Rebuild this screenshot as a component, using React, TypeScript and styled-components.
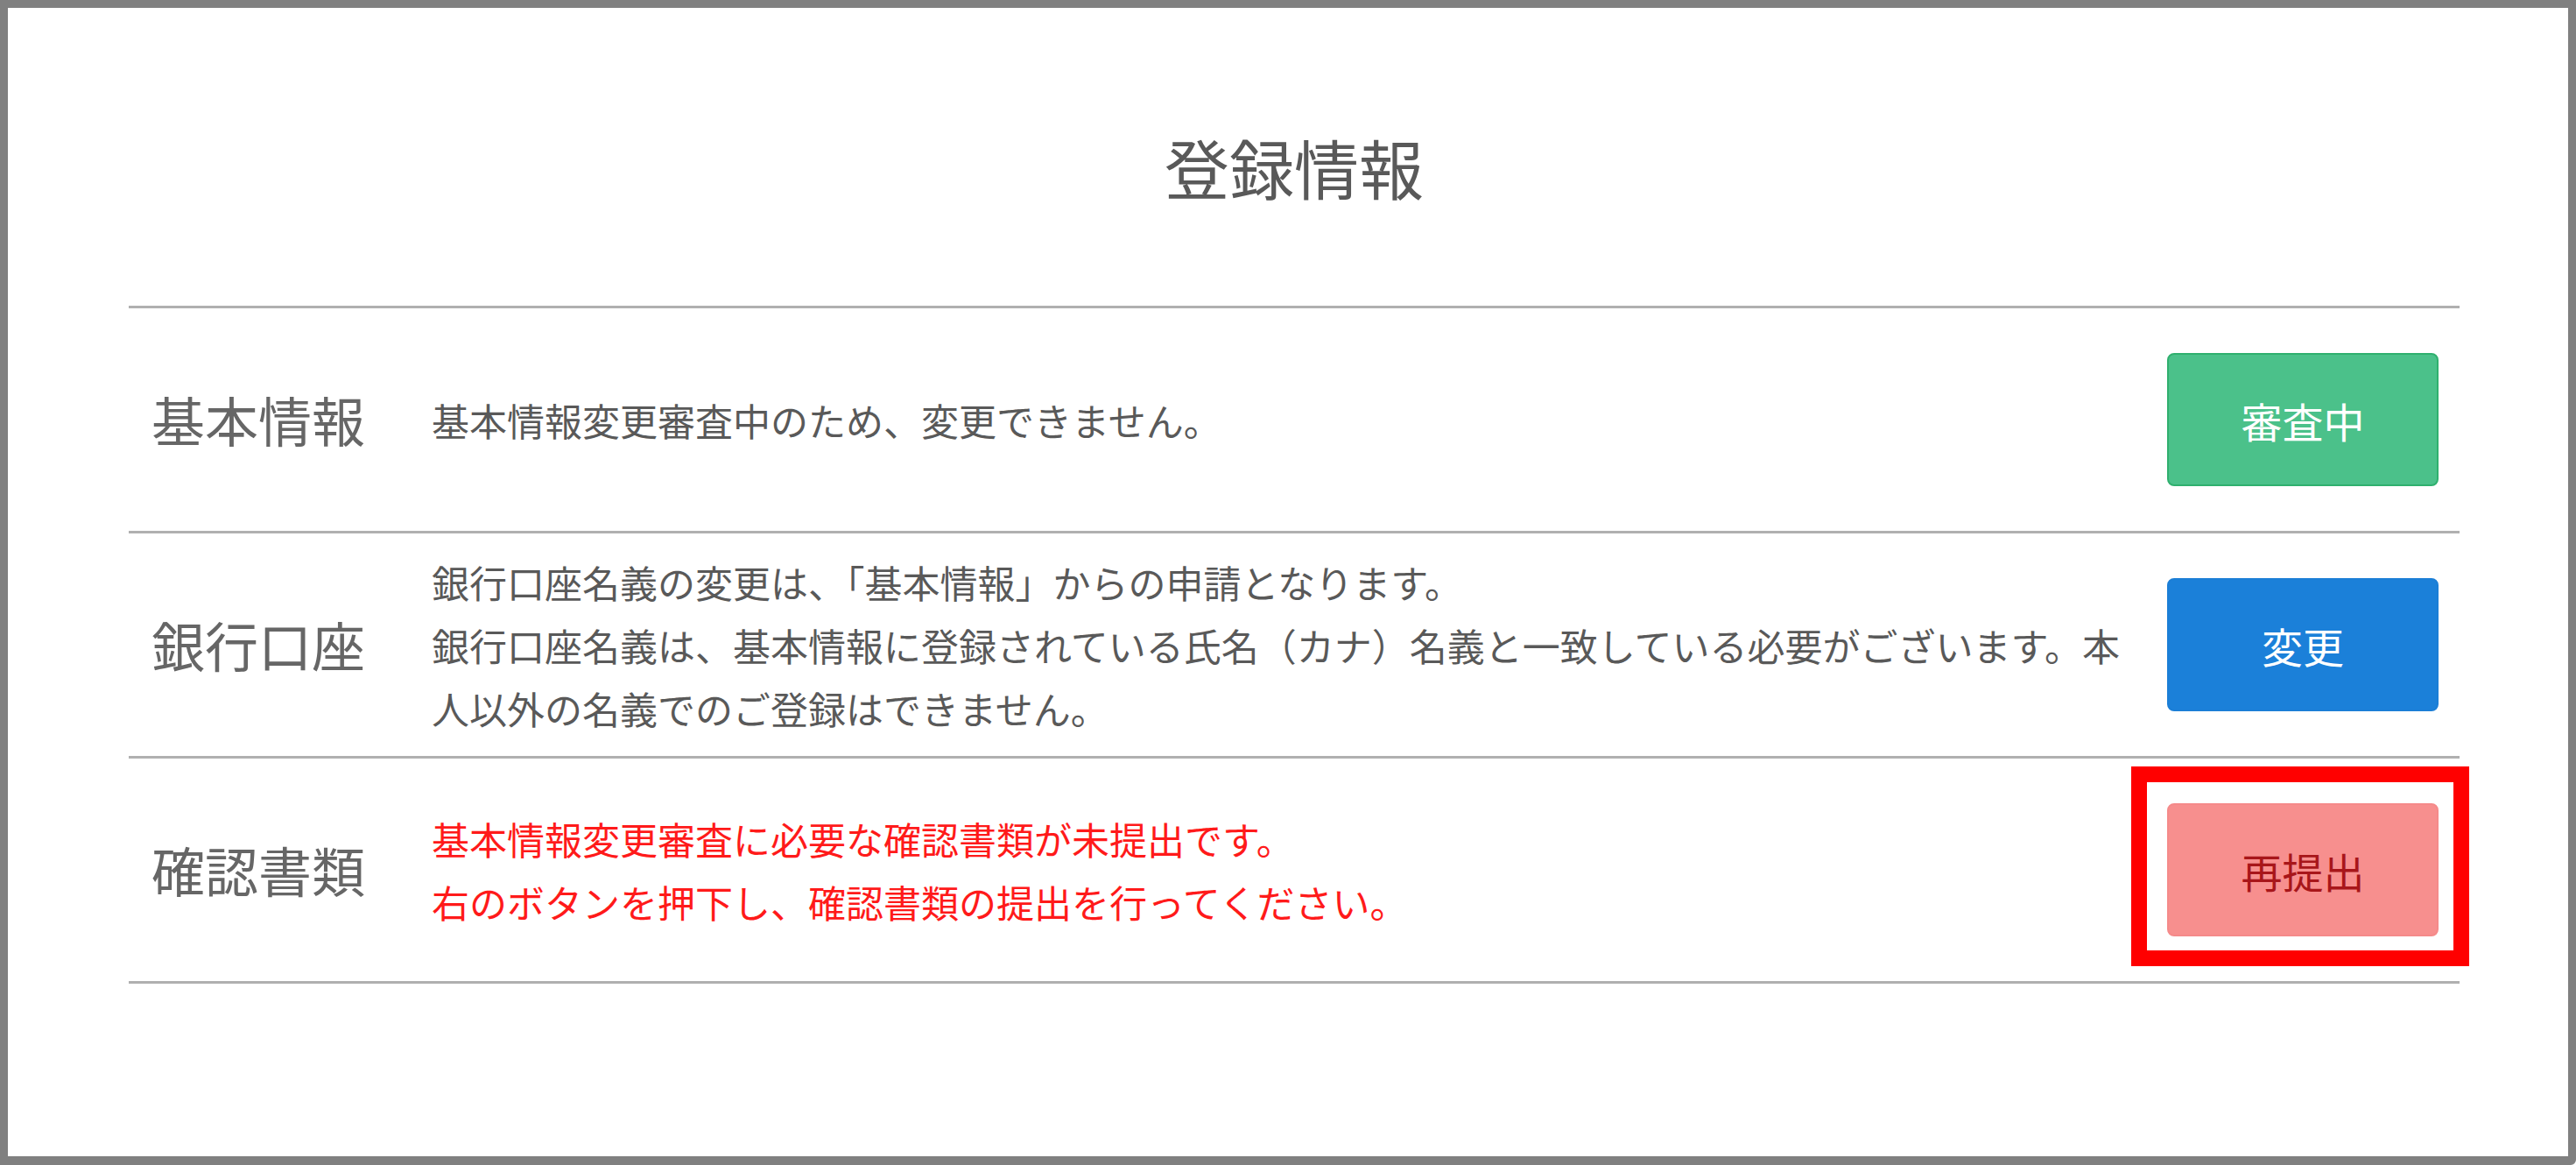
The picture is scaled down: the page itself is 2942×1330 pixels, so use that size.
import React from "react";
import styled, { createGlobalStyle, css } from "styled-components";

const Global = createGlobalStyle`
  html, body {
    margin: 0;
    padding: 0;
    background: #ffffff;
  }
  body {
    font-family: "Noto Sans CJK JP", "Noto Sans", sans-serif;
  }
  * { box-sizing: border-box; }
`;

const Frame = styled.div`
  width: 2942px;
  height: 1330px;
  border: 9px solid #808080;
  border-bottom-width: 10px;
  border-radius: 0 0 6px 0;
  background: #ffffff;
  display: flex;
  flex-direction: column;
  padding: 0 124px 0 138px;
`;

const Title = styled.h1`
  margin: 144px 0 122px;
  font-size: 74px;
  line-height: 74px;
  font-weight: 400;
  color: #595959;
  text-align: center;
`;

const List = styled.div`
  border-top: 3px solid #b0b0b0;
  display: flex;
  flex-direction: column;
`;

const Row = styled.div`
  display: flex;
  align-items: center;
  min-height: 257px;
  padding: 0 24px 0 26px;
  border-bottom: 3px solid #b0b0b0;
`;

const Label = styled.div`
  flex: 0 0 320px;
  font-size: 61px;
  line-height: 72px;
  color: #666666;
`;

const Desc = styled.div<{ $alert?: boolean }>`
  flex: 0 0 1952px;
  font-size: 43px;
  line-height: 72px;
  color: ${(p) => (p.$alert ? "#ff1a1a" : "#595959")};
`;

const Line = styled.p`
  margin: 0;
`;

type Tone = "green" | "blue" | "pink";

const tones: Record<Tone, ReturnType<typeof css>> = {
  green: css`
    background: #4bc18a;
    border: 2px solid #2fb06e;
    color: #ffffff;
  `,
  blue: css`
    background: #1b80d9;
    border: 2px solid #1b7ed6;
    color: #ffffff;
  `,
  pink: css`
    background: #f78f8e;
    border: 2px solid #f58a8a;
    color: #a8161a;
  `,
};

const ButtonSlot = styled.div<{ $highlight?: boolean }>`
  margin-left: auto;
  position: relative;
  display: flex;
  ${(p) =>
    p.$highlight &&
    css`
      &::after {
        content: "";
        position: absolute;
        top: -42px;
        left: -41px;
        right: -35px;
        bottom: -34px;
        border: 18px solid #ff0000;
        pointer-events: none;
      }
    `}
`;

const ActionButton = styled.button<{ $tone: Tone }>`
  width: 310px;
  height: 152px;
  border-radius: 8px;
  font-family: "Noto Sans CJK JP", "Noto Sans", sans-serif;
  font-size: 47px;
  line-height: 1;
  padding: 0;
  cursor: pointer;
  display: flex;
  align-items: center;
  justify-content: center;
  ${(p) => tones[p.$tone]}
`;

type Item = {
  label: string;
  lines: string[];
  alert?: boolean;
  button: string;
  tone: Tone;
  highlight?: boolean;
};

const items: Item[] = [
  {
    label: "基本情報",
    lines: ["基本情報変更審査中のため、変更できません。"],
    button: "審査中",
    tone: "green",
  },
  {
    label: "銀行口座",
    lines: [
      "銀行口座名義の変更は、「基本情報」からの申請となります。",
      "銀行口座名義は、基本情報に登録されている氏名（カナ）名義と一致している必要がございます。本人以外の名義でのご登録はできません。",
    ],
    button: "変更",
    tone: "blue",
  },
  {
    label: "確認書類",
    lines: [
      "基本情報変更審査に必要な確認書類が未提出です。",
      "右のボタンを押下し、確認書類の提出を行ってください。",
    ],
    alert: true,
    button: "再提出",
    tone: "pink",
    highlight: true,
  },
];

export default function App() {
  return (
    <>
      <Global />
      <Frame>
        <Title>登録情報</Title>
        <List>
          {items.map((it) => (
            <Row key={it.label}>
              <Label>{it.label}</Label>
              <Desc $alert={it.alert}>
                {it.lines.map((l) => (
                  <Line key={l}>{l}</Line>
                ))}
              </Desc>
              <ButtonSlot $highlight={it.highlight}>
                <ActionButton $tone={it.tone}>{it.button}</ActionButton>
              </ButtonSlot>
            </Row>
          ))}
        </List>
      </Frame>
    </>
  );
}
